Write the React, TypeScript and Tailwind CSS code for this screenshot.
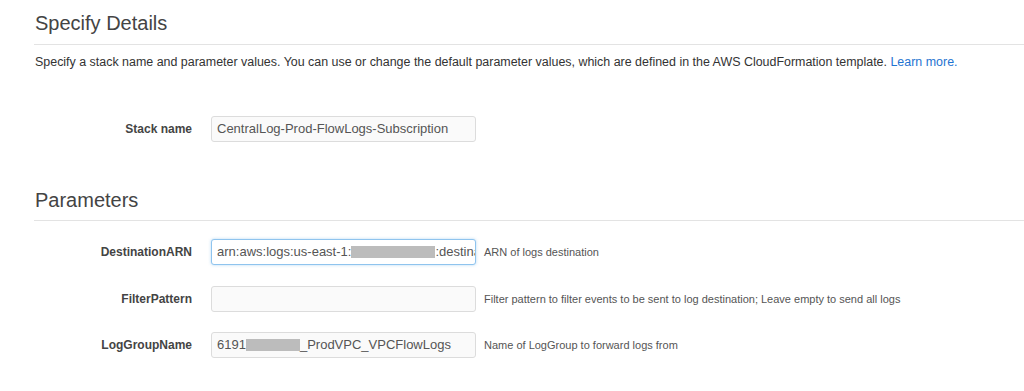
const font = { fontFamily: '"Liberation Sans", Arial, Helvetica, sans-serif' }

function Redacted({ w }: { w: number }) {
  return (
    <span
      className="inline-block h-[12px] shrink-0 align-[-2px] bg-[#bcbcbc] blur-[0.6px]"
      style={{ width: w }}
    />
  )
}

function Field({
  label,
  help,
  focused,
  children,
  className,
}: {
  label: string
  help?: string
  focused?: boolean
  children?: React.ReactNode
  className?: string
}) {
  return (
    <div className={`flex items-center ${className ?? ''}`}>
      <div className="w-[158px] text-right text-[12px] font-bold text-[#444]">{label}</div>
      <div
        className={`ml-[19px] h-[26px] w-[265px] shrink-0 overflow-hidden whitespace-nowrap rounded-[3px] border pl-[5px] text-[13px] leading-[24px] text-[#555] ${
          focused
            ? 'border-[#8fc4ee] bg-white shadow-[0_0_3px_rgba(102,175,233,0.5)]'
            : 'border-[#dcdcdc] bg-[#fafafa]'
        }`}
      >
        {children}
      </div>
      {help && <div className="ml-[8px] text-[11px] text-[#555]">{help}</div>}
    </div>
  )
}

export default function App() {
  return (
    <div className="h-[391px] w-[1024px] overflow-hidden bg-white pl-[34px] pt-[11px]" style={font}>
      <h2 className="border-b border-[#e3e3e3] pb-[9px] pl-px text-[20px] leading-[24px] text-[#444]">
        Specify Details
      </h2>
      <p className="mt-[9px] pl-px text-[12.45px] leading-[16px] text-[#333]">
        Specify a stack name and parameter values. You can use or change the default parameter values, which are
        defined in the AWS CloudFormation template. <span className="text-[#1f74d1]">Learn more.</span>
      </p>

      <Field label="Stack name" className="mt-[46px]">
        CentralLog-Prod-FlowLogs-Subscription
      </Field>

      <h2 className="mt-[46px] border-b border-[#e3e3e3] pb-[8px] pl-px text-[20px] leading-[24px] text-[#444]">
        Parameters
      </h2>

      <Field label="DestinationARN" help="ARN of logs destination" focused className="mt-[18px]">
        arn:aws:logs:us-east-1:
        <Redacted w={84} />
        :destina
      </Field>
      <Field
        label="FilterPattern"
        help="Filter pattern to filter events to be sent to log destination; Leave empty to send all logs"
        className="mt-[21px]"
      />
      <Field label="LogGroupName" help="Name of LogGroup to forward logs from" className="mt-[20px]">
        6191
        <Redacted w={54} />
        _ProdVPC_VPCFlowLogs
      </Field>
    </div>
  )
}
